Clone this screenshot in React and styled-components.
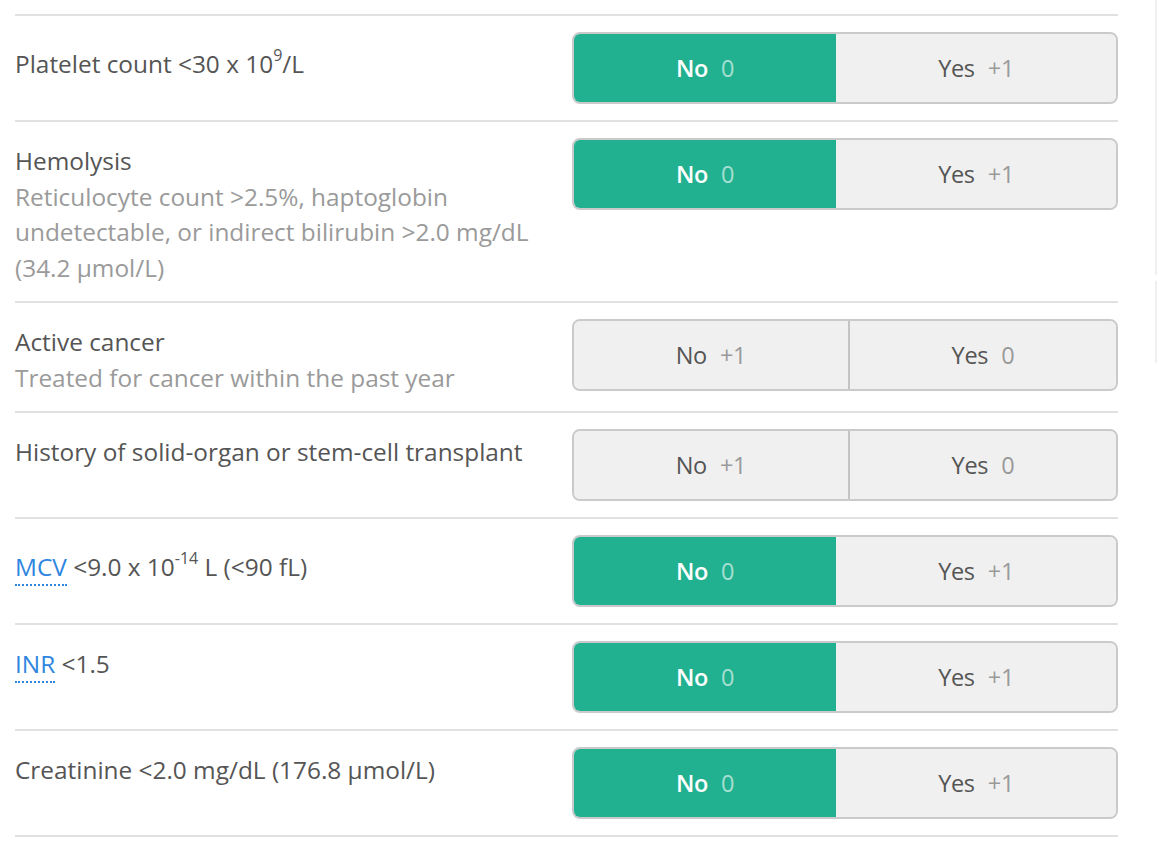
import styled, { createGlobalStyle } from "styled-components";

const GlobalStyle = createGlobalStyle`
  html, body {
    margin: 0;
    padding: 0;
    background: #fff;
  }
  body {
    font-family: "Open Sans", "Noto Sans", sans-serif;
    -webkit-font-smoothing: antialiased;
  }
`;

const Page = styled.div`
  display: flex;
  align-items: flex-start;
  width: 1157px;
  padding-top: 14px;
  box-sizing: border-box;
`;

const Form = styled.div`
  width: 1103px;
  margin-left: 15px;
  border-top: 2px solid #e1e1e1;
`;

const Rail = styled.div`
  display: flex;
  flex-direction: column;
  gap: 6px;
  margin-left: auto;
  margin-top: -14px;
`;

const RailLine = styled.div`
  width: 2px;
  height: ${(p) => p.$h}px;
  background: #f0f0f0;
`;

const Row = styled.div`
  display: grid;
  grid-template-columns: 1fr 546px;
  column-gap: 12px;
  align-items: start;
  padding: 16px 0;
  border-bottom: 2px solid #e1e1e1;
`;

const Label = styled.div`
  padding-top: 5px;
  color: #555;
  font-size: 24.4px;
  line-height: 35.5px;
`;

const Title = styled.div`
  color: #555;
`;

const Hint = styled.div`
  color: #9a9a9a;
`;

const Sup = styled.sup`
  font-size: 16px;
  line-height: 36px;
  vertical-align: 12px;
`;

const Term = styled.span`
  color: #2f86e0;
  border-bottom: 2px dotted #2f86e0;
  padding-bottom: 1px;
`;

const Toggle = styled.div`
  display: flex;
  height: 72px;
  box-sizing: border-box;
  border: 2px solid #cacaca;
  border-radius: 8px;
  overflow: hidden;
  background: #f0f0f0;
`;

const Option = styled.div`
  flex: 1 1 auto;
  display: flex;
  align-items: center;
  justify-content: center;
  gap: 13px;
  font-size: 23.5px;
  letter-spacing: -0.3px;
  background: ${(p) => (p.$active ? "#22b190" : "#f0f0f0")};
  border-left: ${(p) => (p.$divider ? "2px solid #c4c4c4" : "none")};
  cursor: pointer;
`;

const OptionText = styled.span`
  color: ${(p) => (p.$active ? "#fff" : "#555")};
  font-weight: ${(p) => (p.$active ? 600 : 400)};
`;

const Score = styled.span`
  color: ${(p) => (p.$active ? "rgba(255,255,255,0.6)" : "#999")};
`;

const noYes = [
  { text: "No", score: "0", active: true },
  { text: "Yes", score: "+1" },
];
const reversed = [
  { text: "No", score: "+1" },
  { text: "Yes", score: "0" },
];

const rows = [
  {
    id: "platelet",
    label: (
      <>
        Platelet count &lt;30 x 10<Sup>9</Sup>/L
      </>
    ),
    options: noYes,
  },
  {
    id: "hemolysis",
    label: "Hemolysis",
    hint: "Reticulocyte count >2.5%, haptoglobin undetectable, or indirect bilirubin >2.0 mg/dL (34.2 µmol/L)",
    options: noYes,
  },
  {
    id: "cancer",
    label: "Active cancer",
    hint: "Treated for cancer within the past year",
    options: reversed,
  },
  {
    id: "transplant",
    label: "History of solid-organ or stem-cell transplant",
    options: reversed,
  },
  {
    id: "mcv",
    label: (
      <>
        <Term>MCV</Term> &lt;9.0 x 10<Sup>-14</Sup> L (&lt;90 fL)
      </>
    ),
    options: noYes,
  },
  {
    id: "inr",
    label: (
      <>
        <Term>INR</Term> &lt;1.5
      </>
    ),
    options: noYes,
  },
  {
    id: "creatinine",
    label: "Creatinine <2.0 mg/dL (176.8 µmol/L)",
    options: noYes,
  },
];

const App = () => (
  <Page>
    <GlobalStyle />
    <Form>
      {rows.map((row) => (
        <Row key={row.id}>
          <Label>
            <Title>{row.label}</Title>
            {row.hint && <Hint>{row.hint}</Hint>}
          </Label>
          <Toggle>
            {row.options.map((opt, i) => (
              <Option
                key={opt.text}
                $active={opt.active}
                $divider={i > 0 && !row.options[i - 1].active && !opt.active}
              >
                <OptionText $active={opt.active}>{opt.text}</OptionText>
                <Score $active={opt.active}>{opt.score}</Score>
              </Option>
            ))}
          </Toggle>
        </Row>
      ))}
    </Form>
    <Rail>
      <RailLine $h={275} />
      <RailLine $h={82} />
    </Rail>
  </Page>
);
export default App;
